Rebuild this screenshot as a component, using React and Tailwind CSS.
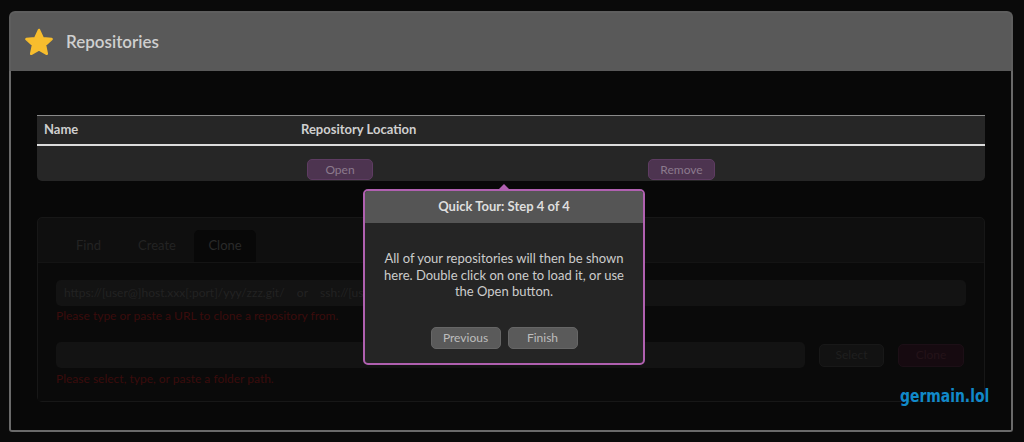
import React from 'react'

const Star = () => (
  <svg width="30" height="28" viewBox="0 0 30 28">
    <polygon
      points="15,2 18.8,10.2 27.6,11.1 21,17.1 22.8,25.8 15,21.4 7.2,25.8 9,17.1 2.4,11.1 11.2,10.2"
      fill="#f7bd2d"
      stroke="#f7bd2d"
      strokeWidth="2.5"
      strokeLinejoin="round"
    />
  </svg>
)

const App = () => {
  return (
    <div className="h-[442px] w-[1024px] bg-[#0a0a0a] pt-[11px] pl-[9px] pr-[11px] font-['Lato',sans-serif]">
      <div className="relative">
        {/* header */}
        <div className="flex h-[60px] items-center gap-[12px] rounded-t-[6px] border-2 border-b-0 border-[#5e5e5e] bg-[#595959] pl-[13px]">
          <Star />
          <span className="text-[17px] font-semibold text-[#cfcfcf]">Repositories</span>
        </div>

        {/* body */}
        <div className="h-[361px] rounded-b-[3px] border-2 border-t-0 border-[#6a6a6a] bg-[#080808] px-[26px] pt-[44px]">
          {/* repo table (highlighted) */}
          <div className="overflow-hidden rounded-b-[5px] bg-[#262626]">
            <div className="flex h-[31px] items-center border-t border-b-2 border-t-[#8a8a8a] border-b-[#dcdcdc] text-[13px] font-bold text-[#cfcfcf]">
              <span className="w-[264px] pl-[7px]">Name</span>
              <span>Repository Location</span>
            </div>
            <div className="flex h-[35px] items-end pb-[1px]">
              <div className="w-[270px]" />
              <button className="h-[21px] w-[66px] rounded-[5px] border border-[#5e3c62] bg-[#4d3450] text-[12px] text-[#8b7a8d]">
                Open
              </button>
              <div className="w-[275px]" />
              <button className="h-[21px] w-[67px] rounded-[5px] border border-[#5e3c62] bg-[#4d3450] text-[12px] text-[#8b7a8d]">
                Remove
              </button>
            </div>
          </div>

          {/* clone panel (dimmed) */}
          <div className="mt-[36px] h-[185px] rounded-[5px] border border-[#171717] bg-[#0f0f0f] pt-[12px]">
            <div className="flex h-[32px] pl-[19px] text-[13px] text-[#232323]">
              <div className="flex w-[63px] items-center justify-center">Find</div>
              <div className="flex w-[74px] items-center justify-center">Create</div>
              <div className="flex w-[62px] items-center justify-center rounded-t-[5px] bg-[#080808] text-[#2a2a2a]">Clone</div>
            </div>
            <div className="h-[139px] border-t border-[#141414] bg-[#0a0a0a] px-[18px] pt-[17px]">
              <div className="flex h-[26px] items-center rounded-[5px] bg-[#131313] pl-[8px] text-[12px] whitespace-pre text-[#222222]">
                {'https://[user@]host.xxx[:port]/yyy/zzz.git/    or    ssh://[user@]host.xxx[:port]/yyy/zzz.git/'}
              </div>
              <div className="mt-[2px] text-[12px] leading-[16px] text-[#3a0c0c]">Please type or paste a URL to clone a repository from.</div>
              <div className="mt-[18px] flex items-center">
                <div className="h-[26px] w-[749px] rounded-[5px] bg-[#131313]" />
                <button className="ml-[14px] h-[23px] w-[65px] rounded-[5px] border border-[#181818] bg-[#121212] text-[12px] text-[#1f1f1f]">
                  Select
                </button>
                <button className="ml-[14px] h-[23px] w-[66px] rounded-[5px] border border-[#1c0f16] bg-[#160a10] text-[12px] text-[#241319]">
                  Clone
                </button>
              </div>
              <div className="mt-[3px] text-[12px] leading-[16px] text-[#3a0c0c]">Please select, type, or paste a folder path.</div>
            </div>
          </div>
        </div>

        {/* quick tour popover */}
        <div className="absolute left-[354px] top-[173px] w-[282px]">
          <div className="ml-[136px] h-0 w-0 border-x-[5px] border-b-[5px] border-x-transparent border-b-[#b060b0]" />
          <div className="h-[176px] overflow-hidden rounded-[5px] border-2 border-[#b060b0] bg-[#252525]">
            <div className="flex h-[32px] items-center justify-center bg-[#555555] text-[13px] font-bold text-[#dedede]">
              Quick Tour: Step 4 of 4
            </div>
            <div className="px-[14px] pt-[27px] text-center text-[13px] leading-[16.5px] text-[#cccccc]">
              All of your repositories will then be shown here. Double click on one to load it, or use the Open button.
            </div>
            <div className="mt-[27px] flex justify-center gap-[7px]">
              <button className="h-[22px] w-[70px] rounded-[5px] border border-[#666] bg-[#5a5a5a] text-[12px] text-[#bdbdbd]">
                Previous
              </button>
              <button className="h-[22px] w-[70px] rounded-[5px] border border-[#666] bg-[#5a5a5a] text-[12px] text-[#bdbdbd]">
                Finish
              </button>
            </div>
          </div>
        </div>

        {/* watermark */}
        <div className="absolute left-[891px] top-[375px] origin-left scale-x-[0.91] font-['DejaVu_Sans_Condensed',sans-serif] text-[17px] leading-[20px] font-bold text-[#1189c9]">
          germain.lol
        </div>
      </div>
    </div>
  )
}

export default App
